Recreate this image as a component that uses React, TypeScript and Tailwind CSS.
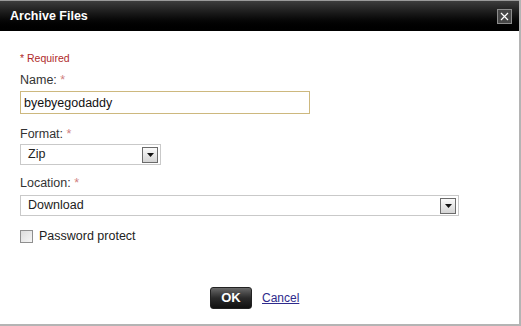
import React, { useState } from 'react';

const font = { fontFamily: '"Liberation Sans", Arial, sans-serif' };

const SelectBox: React.FC<{ value: string; width: string }> = ({ value, width }) => (
  <div className={`${width} h-[21px] border border-[#c9c9c9] bg-white flex items-center justify-between pl-[7px] pr-[2px]`}>
    <span className="text-[12.5px] text-[#222]">{value}</span>
    <div className="w-[16px] h-[16px] border border-[#6b6b6b] bg-gradient-to-b from-[#fafafa] to-[#d4d4d4] flex items-center justify-center">
      <svg width="7" height="4" viewBox="0 0 7 4"><path d="M0 0h7L3.5 4z" fill="#111" /></svg>
    </div>
  </div>
);

const Label: React.FC<{ text: string }> = ({ text }) => (
  <p className="text-[12.5px] leading-[14px] text-[#333]">
    {text} <span className="text-[#cf7f7f]">*</span>
  </p>
);

export default function App() {
  const [name, setName] = useState('byebyegodaddy');
  return (
    <div style={font} className="w-[521px] h-[326px] bg-white border-r-2 border-b-2 border-[#b4b4b4] flex flex-col">
      <div className="h-[31px] border-t border-[#9a9a9a] bg-gradient-to-b from-[#3d3d3d] to-[#000] flex items-center justify-between pl-[10px] pr-[7px]">
        <span className="text-[12.5px] font-bold text-white">Archive Files</span>
        <button className="w-[15px] h-[15px] border border-[#8c8c8c] bg-[#474747] flex items-center justify-center">
          <svg width="9" height="9" viewBox="0 0 9 9"><path d="M1 1l7 7M8 1L1 8" stroke="#fff" strokeWidth="1.2" /></svg>
        </button>
      </div>

      <div className="pl-[20px] pt-[21px] flex flex-col">
        <p className="text-[10.5px] leading-[13px] text-[#b02a2a]">* Required</p>

        <div className="mt-[8px]"><Label text="Name:" /></div>
        <input
          value={name}
          onChange={e => setName(e.target.value)}
          className="mt-[4px] w-[290px] h-[23px] border border-[#cdb87e] px-[3px] text-[12.5px] text-[#111] outline-none"
        />

        <div className="mt-[13px]"><Label text="Format:" /></div>
        <div className="mt-[3px]"><SelectBox value="Zip" width="w-[141px]" /></div>

        <div className="mt-[11px]"><Label text="Location:" /></div>
        <div className="mt-[5px]"><SelectBox value="Download" width="w-[439px]" /></div>

        <label className="mt-[11px] flex items-center gap-[6px]">
          <span className="w-[13px] h-[13px] border border-[#8f8f8f] bg-gradient-to-br from-[#dcdcdc] to-[#f6f6f6]" />
          <span className="text-[12.5px] text-[#222]">Password protect</span>
        </label>
      </div>

      <div className="mt-[41px] flex items-center gap-[10px] pl-[210px]">
        <button className="w-[42px] h-[22px] rounded-[3px] border border-[#222] bg-gradient-to-b from-[#6a6a6a] via-[#2b2b2b] to-[#111] text-white text-[13px] font-bold">OK</button>
        <a href="#" className="text-[12px] text-[#2e2a8c] underline">Cancel</a>
      </div>
    </div>
  );
}
